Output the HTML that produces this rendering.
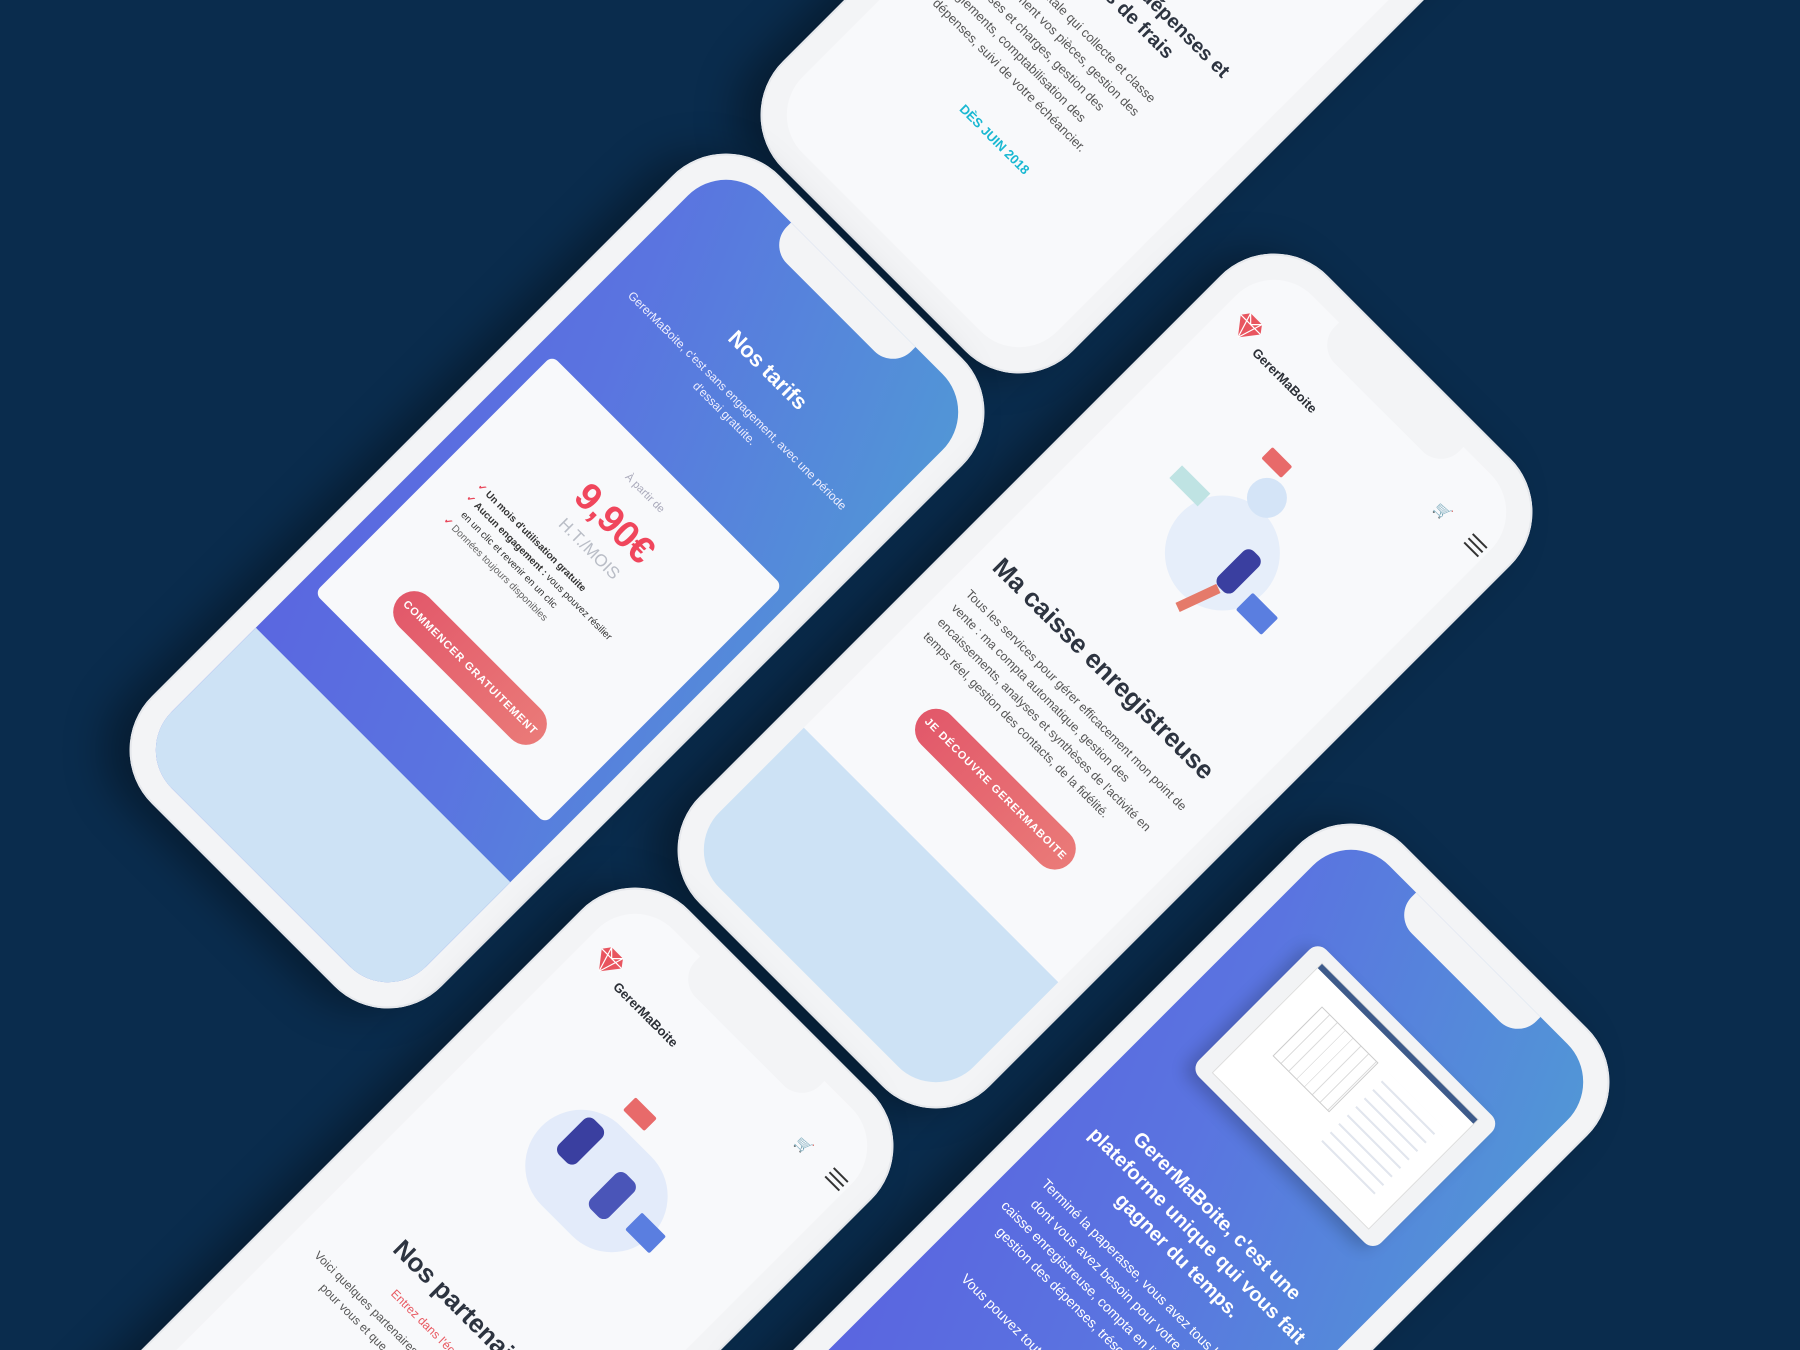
<!DOCTYPE html>
<html><head><meta charset="utf-8"><style>
*{margin:0;padding:0;box-sizing:border-box}
html{width:1800px;height:1350px;overflow:hidden}
body{width:1800px;height:1350px;background:#0a2c4d;overflow:hidden;position:relative;font-family:"Liberation Sans",sans-serif}
.phone{position:absolute;width:410px;height:888px;transform:rotate(45deg);background:#f3f4f6;border-radius:76px;box-shadow:0 0 0 2px #e6e8ec inset,-18px 18px 40px rgba(0,0,0,.35)}
.screen{position:absolute;left:25px;top:25px;width:360px;height:838px;border-radius:54px;overflow:hidden;background:#f8f9fb}
.notch{position:absolute;left:92px;top:-2px;width:176px;height:34px;background:#f3f4f6;border-radius:0 0 26px 26px;z-index:5}
.grad{background:linear-gradient(to top right,#5a63e0 0%,#5a74e0 45%,#5197d6 100%)}
.lb{position:absolute;left:0;right:0;bottom:0;background:#cde2f5}
.abs{position:absolute}
.btn{position:absolute;height:42px;border-radius:21px;background:linear-gradient(to right,#e2586a,#ea7a78);color:#fff;font-weight:bold;font-size:11px;letter-spacing:1px;text-align:center;line-height:42px}
.logo{position:absolute;left:16px;top:50px;display:flex;align-items:center}
.logo span{font-weight:bold;font-size:13px;color:#2b2f36;margin-left:6px;margin-top:22px}
.cart{position:absolute;left:290px;top:52px;font-size:14px;color:#333}
.ham{position:absolute;left:336px;top:50px;width:20px}
.ham i{display:block;height:2px;background:#333;margin:4px 0}
</style></head><body>

<!-- Phone 3 (top) -->
<div class="phone" style="left:983px;top:-498px">
 <div class="screen">
  <div class="notch"></div>
  <div class="abs" style="left:30px;top:470px;width:300px;font-weight:bold;font-size:20px;color:#2d3440;text-align:center;line-height:26px">Gestion des dépenses et<br>notes de frais</div>
  <div class="abs" style="left:40px;top:542px;width:290px;font-size:13px;color:#555;text-align:left;line-height:21px">Une boîte digitale qui collecte et classe<br>intelligemment vos pièces, gestion des<br>dépenses et charges, gestion des<br>règlements, comptabilisation des<br>dépenses, suivi de votre échéancier.</div>
  <div class="abs" style="left:0;width:360px;top:685px;text-align:center;font-weight:bold;font-size:13px;color:#19b8d2">DÈS JUIN 2018</div>
 </div>
</div>

<!-- Phone 1 (Nos tarifs) -->
<div class="phone" style="left:352px;top:137px">
 <div class="screen grad">
  <div class="notch"></div>
  <div class="lb" style="top:665px"></div>
  <div class="abs" style="left:0;width:360px;top:108px;text-align:center;color:#fff;font-weight:bold;font-size:22px">Nos tarifs</div>
  <div class="abs" style="left:20px;width:320px;top:155px;text-align:center;color:#eef;font-size:12px;line-height:18px">GererMaBoite, c'est sans engagement, avec une période d'essai gratuite.</div>
  <div class="abs" style="left:17px;top:263px;width:326px;height:336px;background:#f8f9fb;border-radius:8px">
   <div class="abs" style="left:0;width:326px;top:26px;text-align:center;color:#aab;font-size:11px">À partir de</div>
   <div class="abs" style="left:0;width:326px;top:54px;text-align:center;color:#f0465c;font-size:38px;font-weight:bold">9,90€</div>
   <div class="abs" style="left:0;width:326px;top:101px;text-align:center;color:#b9bdc6;font-size:17px">H.T./MOIS</div>
   <div class="abs" style="left:40px;top:136px;font-size:10px;color:#333;line-height:16px">
    <div><b style="color:#e8475a">✓</b> <b>Un mois d'utilisation gratuite</b></div>
    <div><b style="color:#e8475a">✓</b> <b>Aucun engagement :</b> vous pouvez résilier<br>&nbsp;&nbsp;&nbsp;en un clic et revenir en un clic</div>
    <div style="color:#666"><b style="color:#e8475a">✓</b> Données toujours disponibles</div>
   </div>
   <div class="btn" style="left:63px;top:258px;width:200px">COMMENCER GRATUITEMENT</div>
  </div>
 </div>
</div>

<!-- Phone 2 (Ma caisse) -->
<div class="phone" style="left:900px;top:237px">
 <div class="screen">
  <div class="notch"></div>
  <div class="lb" style="top:665px"></div>
  <div class="logo"><svg width="30" height="28" viewBox="0 0 30 28"><path d="M7 1h16l6 8-14 18L1 9z" fill="#e8555f"/><path d="M1 9h28M7 1l8 26M23 1l-8 26M7 1l8 8 8-8" stroke="#fff" stroke-width="1.2" fill="none"/></svg><span>GererMaBoite</span></div>
  <div class="cart">🛒</div>
  <div class="ham"><i></i><i></i><i></i></div>
  <div class="abs" style="left:115px;top:188px;width:115px;height:115px;border-radius:50%;background:#e6eefa"></div>
  <div class="abs" style="left:145px;top:155px;width:40px;height:40px;border-radius:50%;background:#d4e4f7"></div>
  <div class="abs" style="left:133px;top:135px;width:28px;height:16px;background:#e86a6a;border-radius:2px"></div>
  <div class="abs" style="left:82px;top:212px;width:40px;height:18px;background:#bfe3e3"></div>
  <div class="abs" style="left:186px;top:222px;width:22px;height:50px;background:#3a3fa0;border-radius:8px"></div>
  <div class="abs" style="left:182px;top:272px;width:10px;height:45px;background:#e57a6a;transform:rotate(20deg)"></div>
  <div class="abs" style="left:222px;top:252px;width:36px;height:24px;background:#5a7ee0;border-radius:2px"></div>
  <div class="abs" style="left:20px;top:396px;width:335px;font-weight:bold;font-size:26px;color:#2d3440">Ma caisse enregistreuse</div>
  <div class="abs" style="left:20px;top:443px;width:320px;font-size:12.5px;color:#555;line-height:20px">Tous les services pour gérer efficacement mon point de vente : ma compta automatique, gestion des encaissements, analyses et synthèses de l'activité en temps réel, gestion des contacts, de la fidélité.</div>
  <div class="btn" style="left:74px;top:552px;width:210px">JE DÉCOUVRE GERERMABOITE</div>
 </div>
</div>

<!-- Phone 4 (Nos partenaires) -->
<div class="phone" style="left:261px;top:871px">
 <div class="screen">
  <div class="notch"></div>
  <div class="logo"><svg width="30" height="28" viewBox="0 0 30 28"><path d="M7 1h16l6 8-14 18L1 9z" fill="#e8555f"/><path d="M1 9h28M7 1l8 26M23 1l-8 26M7 1l8 8 8-8" stroke="#fff" stroke-width="1.2" fill="none"/></svg><span>GererMaBoite</span></div>
  <div class="cart">🛒</div>
  <div class="ham"><i></i><i></i><i></i></div>
  <div class="abs" style="left:100px;top:176px;width:155px;height:112px;border-radius:56px;background:#e3ebfa"></div>
  <div class="abs" style="left:146px;top:145px;width:30px;height:18px;background:#e86a6a;border-radius:2px"></div>
  <div class="abs" style="left:125px;top:190px;width:26px;height:50px;background:#3a3fa0;border-radius:8px"></div>
  <div class="abs" style="left:186px;top:206px;width:26px;height:50px;background:#4a55b8;border-radius:8px"></div>
  <div class="abs" style="left:232px;top:222px;width:34px;height:24px;background:#5a7ee0;border-radius:2px"></div>
  <div class="abs" style="left:0;width:360px;top:402px;text-align:center;font-weight:bold;font-size:26px;color:#2d3440">Nos partenaires</div>
  <div class="abs" style="left:0;width:360px;top:447px;text-align:center;font-size:12px;color:#e8575f">Entrez dans l'écosystème</div>
  <div class="abs" style="left:30px;width:300px;top:472px;text-align:center;font-size:12px;color:#555;line-height:19px">Voici quelques partenaires que nous avons sélectionnés pour vous et que nous avons des intégrations.</div>
 </div>
</div>

<!-- Phone 5 -->
<div class="phone" style="left:977px;top:807px">
 <div class="screen grad">
  <div class="notch"></div>
  <div class="abs" style="left:57px;top:104px;width:258px;height:180px;background:#f2f3f5;border-radius:12px;box-shadow:-6px 8px 16px rgba(0,0,0,.2)">
   <div class="abs" style="left:18px;top:12px;width:222px;height:156px;background:#fff;border:1px solid #ddd">
    <div style="height:6px;background:#3d5a8a"></div>
    <div class="abs" style="left:30px;top:30px;width:80px;height:70px;border:1px solid #ccc;background:repeating-linear-gradient(90deg,#fff 0 10px,#ddd 10px 11px)"></div>
    <div class="abs" style="left:125px;top:30px;width:75px;height:105px;background:repeating-linear-gradient(180deg,#fff 0 10px,#e2e6ee 10px 12px)"></div>
   </div>
  </div>
  <div class="abs" style="left:20px;width:320px;top:356px;text-align:center;color:#fff;font-weight:bold;font-size:20px;line-height:28px">GererMaBoite, c'est une plateforme unique qui vous fait gagner du temps.</div>
  <div class="abs" style="left:20px;width:320px;top:456px;text-align:center;color:#fff;font-size:14px;line-height:22px">Terminé la paperasse, vous avez tous les outils dont vous avez besoin pour votre entreprise : caisse enregistreuse, compta en ligne automatique, gestion des dépenses, trésorerie, facturation…</div>
  <div class="abs" style="left:20px;width:320px;top:580px;text-align:center;color:#fff;font-size:14px;line-height:22px">Vous pouvez tout gérer depuis votre mobile.</div>
 </div>
</div>

</body></html>
